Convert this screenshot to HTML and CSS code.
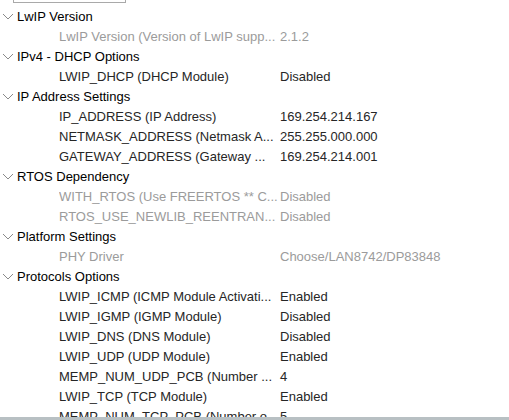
FILE: index.html
```html
<!DOCTYPE html>
<html lang="en">
<head>
    <meta charset="UTF-8">
    <title>LwIP Configuration</title>
    <link rel="stylesheet" href="styles.css">
</head>
<body>
    <div class="top-strip"><div class="search-box"></div></div>

    <div class="tree">
        <div class="group">
            <svg class="chev" width="12" height="8" viewBox="0 0 12 8"><polyline points="1,1 6,6 11,1"/></svg>
            <span>LwIP Version</span>
        </div>
        <div class="item off"><span class="label">LwIP Version (Version of LwIP supp...</span><span class="value">2.1.2</span></div>

        <div class="group">
            <svg class="chev" width="12" height="8" viewBox="0 0 12 8"><polyline points="1,1 6,6 11,1"/></svg>
            <span>IPv4 - DHCP Options</span>
        </div>
        <div class="item"><span class="label">LWIP_DHCP (DHCP Module)</span><span class="value">Disabled</span></div>

        <div class="group">
            <svg class="chev" width="12" height="8" viewBox="0 0 12 8"><polyline points="1,1 6,6 11,1"/></svg>
            <span>IP Address Settings</span>
        </div>
        <div class="item"><span class="label">IP_ADDRESS (IP Address)</span><span class="value">169.254.214.167</span></div>
        <div class="item"><span class="label">NETMASK_ADDRESS (Netmask A...</span><span class="value">255.255.000.000</span></div>
        <div class="item"><span class="label">GATEWAY_ADDRESS (Gateway ...</span><span class="value">169.254.214.001</span></div>

        <div class="group">
            <svg class="chev" width="12" height="8" viewBox="0 0 12 8"><polyline points="1,1 6,6 11,1"/></svg>
            <span>RTOS Dependency</span>
        </div>
        <div class="item off"><span class="label">WITH_RTOS (Use FREERTOS ** C...</span><span class="value">Disabled</span></div>
        <div class="item off"><span class="label">RTOS_USE_NEWLIB_REENTRAN...</span><span class="value">Disabled</span></div>

        <div class="group">
            <svg class="chev" width="12" height="8" viewBox="0 0 12 8"><polyline points="1,1 6,6 11,1"/></svg>
            <span>Platform Settings</span>
        </div>
        <div class="item off"><span class="label">PHY Driver</span><span class="value">Choose/LAN8742/DP83848</span></div>

        <div class="group">
            <svg class="chev" width="12" height="8" viewBox="0 0 12 8"><polyline points="1,1 6,6 11,1"/></svg>
            <span>Protocols Options</span>
        </div>
        <div class="item"><span class="label">LWIP_ICMP (ICMP Module Activati...</span><span class="value">Enabled</span></div>
        <div class="item"><span class="label">LWIP_IGMP (IGMP Module)</span><span class="value">Disabled</span></div>
        <div class="item"><span class="label">LWIP_DNS (DNS Module)</span><span class="value">Disabled</span></div>
        <div class="item"><span class="label">LWIP_UDP (UDP Module)</span><span class="value">Enabled</span></div>
        <div class="item"><span class="label">MEMP_NUM_UDP_PCB (Number ...</span><span class="value">4</span></div>
        <div class="item"><span class="label">LWIP_TCP (TCP Module)</span><span class="value">Enabled</span></div>
        <div class="item"><span class="label">MEMP_NUM_TCP_PCB (Number o...</span><span class="value">5</span></div>
    </div>

    <div class="scroll-bar"></div>
</body>
</html>
```

FILE: styles.css
```css
body {
    margin: 0;
    background-color: white;
    font-family: "Liberation Sans", Arial, sans-serif;
    font-size: 13px;
    color: #262626;
    height: 420px;
    overflow: hidden;
    display: flex;
    flex-direction: column;
}
.top-strip {
    height: 3px;
    flex: none;
}
.search-box {
    margin-left: 13px;
    width: 111px;
    height: 2px;
    border: 1px solid #a9a9a9;
    border-top: none;
}
.tree {
    height: 414px;
    flex: none;
    overflow: hidden;
    padding-top: 4px;
    box-sizing: border-box;
}
.group,
.item {
    height: 20px;
    line-height: 20px;
    display: flex;
    align-items: center;
    white-space: nowrap;
}
.group {
    color: #000;
}
.chev {
    margin-left: 2px;
    margin-right: 3px;
    fill: none;
    stroke: #8a8a8a;
    stroke-width: 1;
}
.item {
    padding-left: 59px;
}
.label {
    width: 221px;
    overflow: hidden;
    flex: none;
}
.value {
    flex: none;
}
.item.off {
    color: #9b9b9b;
}
.scroll-bar {
    flex: 1;
    background-color: #b8c0c3;
}
```
